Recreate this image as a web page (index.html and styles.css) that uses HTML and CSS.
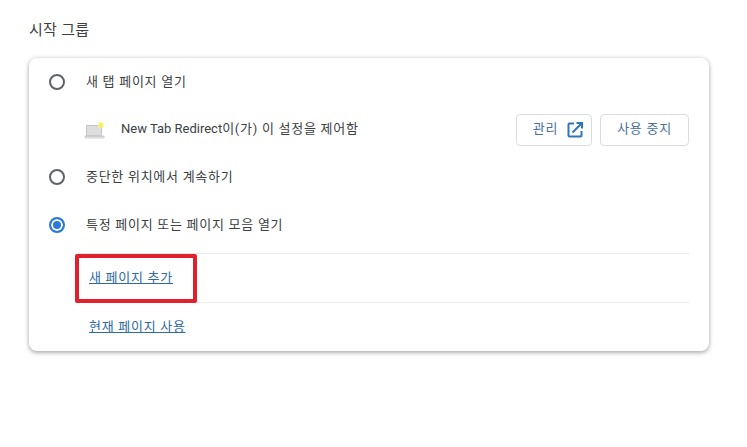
FILE: index.html
```html
<!DOCTYPE html>
<html lang="ko">
<head>
  <meta charset="UTF-8">
  <title>시작 그룹</title>
  <link rel="stylesheet" href="styles.css">
</head>
<body>
  <h2 class="section-title">시작 그룹</h2>
  <div class="card">
    <div class="row">
      <span class="radio"></span>
      <span class="label">새 탭 페이지 열기</span>
    </div>
    <div class="row policy-row">
      <svg class="ext-icon" width="24" height="20" viewBox="0 0 24 20">
        <defs>
          <radialGradient id="glow">
            <stop offset="0" stop-color="#fff04a"/>
            <stop offset="0.5" stop-color="#f8ee70"/>
            <stop offset="1" stop-color="#fdfbd8" stop-opacity="0"/>
          </radialGradient>
          <linearGradient id="base" x1="0" y1="0" x2="0" y2="1">
            <stop offset="0" stop-color="#d4d4d4"/>
            <stop offset="1" stop-color="#f2f2f2"/>
          </linearGradient>
        </defs>
        <path d="M3.500 5.500h15v10h-15z" fill="#dedede" stroke="#c4c4c4"/>
        <path d="M2 15.500h19l1 2H1z" fill="#cdcdcd"/>
        <path d="M2 17.500h19v1.500H2z" fill="url(#base)"/>
        <circle cx="18" cy="5" r="4" fill="url(#glow)"/>
      </svg>
      <span class="label policy-text"><span class="latin">New Tab Redirect</span>이(가) 이 설정을 제어함</span>
      <div class="actions">
        <button class="btn manage"><span class="label">관리</span>
          <svg width="16" height="16" viewBox="0 0 16 16">
            <path d="M7 1.500H2.500a1 1 0 0 0-1 1v11a1 1 0 0 0 1 1h11a1 1 0 0 0 1-1V9" fill="none" stroke="#2f74c0" stroke-width="2"/>
            <path d="M5.500 10.500L14 2M9.500 1h5.500v5.500" fill="none" stroke="#2f74c0" stroke-width="2"/>
          </svg>
        </button>
        <button class="btn"><span class="label">사용 중지</span></button>
      </div>
    </div>
    <div class="row">
      <span class="radio"></span>
      <span class="label">중단한 위치에서 계속하기</span>
    </div>
    <div class="row">
      <span class="radio checked"></span>
      <span class="label">특정 페이지 또는 페이지 모음 열기</span>
    </div>
    <div class="pages">
      <div class="page-row highlighted"><a class="label" href="#">새 페이지 추가</a></div>
      <div class="page-row"><a class="label" href="#">현재 페이지 사용</a></div>
    </div>
  </div>
</body>
</html>
```

FILE: styles.css
```css
* {
  box-sizing: border-box;
}

body {
  margin: 0;
  min-height: 100vh;
  padding: 0 38px 0 29px;
  background: #fff;
  color: #3c4043;
  font-family: Roboto, "Noto Sans CJK KR", sans-serif;
  font-size: 13px;
  letter-spacing: 0.72px;
}

.section-title {
  margin: 0;
  height: 58px;
  padding-top: 20px;
  font-size: 15px;
  line-height: 20px;
  font-weight: 400;
  letter-spacing: 0.3px;
}

.card {
  width: 680px;
  height: 293px;
  background: #fff;
  border-radius: 8px;
  box-shadow: 0 2px 4px rgba(60, 64, 67, 0.35), 0 0 4px rgba(60, 64, 67, 0.18);
}

.row {
  display: flex;
  align-items: center;
  height: 48px;
  padding: 0 20px;
}

.policy-row {
  height: 47px;
  padding-left: 54px;
}

.label {
  position: relative;
  top: -2px;
}

.latin {
  letter-spacing: 0;
}

.radio {
  width: 16px;
  height: 16px;
  margin-right: 21px;
  border: 2px solid #5f6368;
  border-radius: 50%;
  flex: none;
}

.radio.checked {
  border-color: #2a7ad6;
  background: #2a7ad6;
  box-shadow: inset 0 0 0 2px #fff;
}

.ext-icon {
  flex: none;
  margin-right: 14px;
}

.actions {
  display: flex;
  gap: 8px;
  margin-left: auto;
}

.btn {
  display: flex;
  align-items: center;
  justify-content: center;
  gap: 9px;
  height: 32px;
  padding: 0;
  width: 89px;
  background: #fff;
  border: 1px solid #dadce0;
  border-radius: 4px;
  color: #4a6f9c;
  font: inherit;
  letter-spacing: inherit;
}

.btn.manage {
  width: 76px;
  padding-left: 8px;
}

.pages {
  margin: 4px 20px 0 46px;
}

.page-row {
  height: 49px;
  padding: 0 0 0 14px;
  display: flex;
  align-items: center;
  border-top: 1px solid #ebebeb;
}

.page-row a {
  color: #2f6aa3;
}

.highlighted {
  position: relative;
}

/* red marker drawn over the first row */
.highlighted::after {
  content: "";
  box-sizing: border-box;
  position: absolute;
  left: 0;
  top: 0;
  width: 122px;
  height: 49px;
  border: 4px solid #e0202c;
  border-radius: 2px;
}
```
